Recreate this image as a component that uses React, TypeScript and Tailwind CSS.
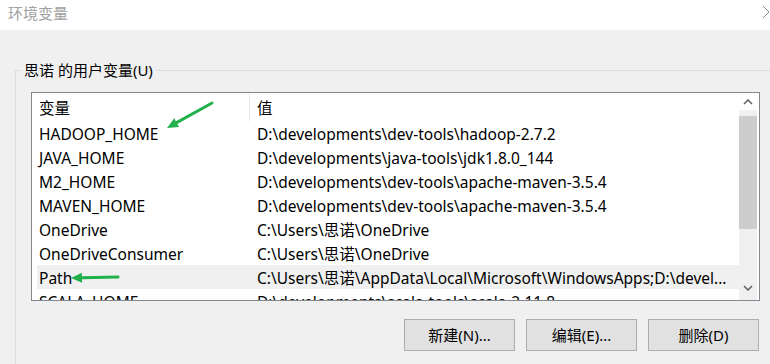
import React from "react";

const rows = [
  ["HADOOP_HOME", "D:\\developments\\dev-tools\\hadoop-2.7.2"],
  ["JAVA_HOME", "D:\\developments\\java-tools\\jdk1.8.0_144"],
  ["M2_HOME", "D:\\developments\\dev-tools\\apache-maven-3.5.4"],
  ["MAVEN_HOME", "D:\\developments\\dev-tools\\apache-maven-3.5.4"],
  ["OneDrive", "C:\\Users\\思诺\\OneDrive"],
  ["OneDriveConsumer", "C:\\Users\\思诺\\OneDrive"],
  ["Path", "C:\\Users\\思诺\\AppData\\Local\\Microsoft\\WindowsApps;D:\\devel..."],
  ["SCALA_HOME", "D:\\developments\\scala-tools\\scala-2.11.8"],
];

const font = { fontFamily: '"Noto Sans", "Noto Sans CJK SC", sans-serif' };

function Arrow({ x1, y1, x2, y2 }: { x1: number; y1: number; x2: number; y2: number }) {
  const a = Math.atan2(y2 - y1, x2 - x1);
  const len = 11;
  const w = 5;
  const bx = x2 - Math.cos(a) * len;
  const by = y2 - Math.sin(a) * len;
  const p1 = `${bx + Math.sin(a) * w},${by - Math.cos(a) * w}`;
  const p2 = `${bx - Math.sin(a) * w},${by + Math.cos(a) * w}`;
  return (
    <g>
      <line x1={x1} y1={y1} x2={bx} y2={by} stroke="#22b14c" strokeWidth="3" strokeLinecap="round" />
      <polygon points={`${x2},${y2} ${p1} ${p2}`} fill="#22b14c" />
    </g>
  );
}

export default function App() {
  return (
    <div className="relative w-[770px] h-[364px] overflow-hidden flex flex-col bg-[#f0f0f0] text-[15px] text-black" style={font}>
      {/* title bar */}
      <div className="h-[30px] bg-white flex items-start justify-between shrink-0">
        <span className="ml-[8px] mt-[2px] text-[#a0a0a0] text-[15px]">环境变量</span>
        <svg width="8" height="14" viewBox="0 0 8 14" className="mt-[5px]">
          <path d="M1 1 L7 7 L1 13" stroke="#8a8a8a" strokeWidth="1" fill="none" />
        </svg>
      </div>

      {/* group box */}
      <div className="relative ml-[15px] mt-[40px] flex-1 border-t border-l border-[#dcdcdc]">
        <span className="absolute -top-[12px] left-[5px] px-[3px] bg-[#f0f0f0] leading-[22px]">思诺 的用户变量(U)</span>

        <div className="ml-[15px] mt-[21px] w-[729px] h-[209px] border border-[#828790] bg-white flex text-[15.5px]">
          <div className="flex-1 flex flex-col overflow-hidden">
            {/* header */}
            <div className="h-[28px] shrink-0 flex items-center">
              <div className="w-[218px] h-full pl-[7px] pt-[3px] flex items-center border-r border-[#e5e5e5]">变量</div>
              <div className="pl-[7px] pt-[3px]">值</div>
            </div>
            {rows.map(([k, v]) => (
              <div
                key={k}
                className={`h-[24px] shrink-0 ml-[5px] pt-[3px] flex items-center whitespace-nowrap ${k === "Path" ? "bg-[#f0f0f0]" : ""}`}
              >
                <div className="w-[213px] pl-[2px]">{k}</div>
                <div className="pl-[7px] overflow-hidden">{v}</div>
              </div>
            ))}
          </div>
          {/* scrollbar */}
          <div className="w-[18px] mr-[2px] bg-[#f0f0f0] flex flex-col">
            <div className="h-[17px] bg-white flex items-center justify-center">
              <svg width="10" height="6" viewBox="0 0 10 6">
                <path d="M1 5 L5 1 L9 5" stroke="#606060" strokeWidth="1.5" fill="none" />
              </svg>
            </div>
            <div className="mt-[6px] h-[113px] bg-[#cdcdcd]" />
            <div className="flex-1" />
            <div className="h-[17px] flex items-center justify-center mb-[4px]">
              <svg width="10" height="6" viewBox="0 0 10 6">
                <path d="M1 1 L5 5 L9 1" stroke="#606060" strokeWidth="1.5" fill="none" />
              </svg>
            </div>
          </div>
        </div>

        <div className="mt-[18px] w-[743px] flex justify-end gap-[11px]">
          {["新建(N)...", "编辑(E)...", "删除(D)"].map((t) => (
            <button
              key={t}
              className="w-[111px] h-[32px] bg-[#e1e1e1] border border-[#adadad] text-[15px]"
            >
              {t}
            </button>
          ))}
        </div>
      </div>

      {/* annotation arrows */}
      <svg className="absolute inset-0 pointer-events-none" width="770" height="364">
        <Arrow x1={212} y1={103} x2={167} y2={128} />
        <Arrow x1={118} y1={277} x2={71} y2={278} />
      </svg>
    </div>
  );
}
